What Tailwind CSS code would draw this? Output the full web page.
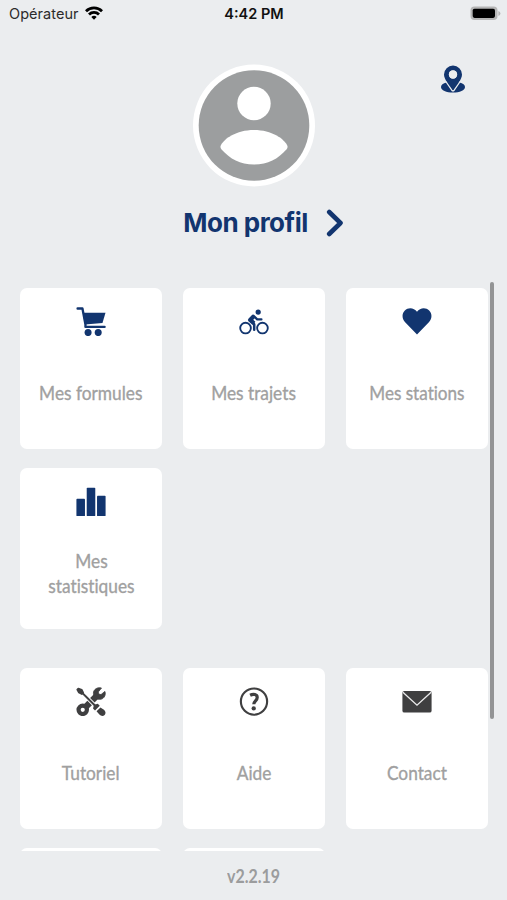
<!DOCTYPE html>
<html lang="fr">
<head>
    <meta charset="UTF-8">
    <meta name="viewport" content="width=device-width, initial-scale=1.0">
    <title>Mon profil</title>
    <script src="https://cdn.jsdelivr.net/npm/@tailwindcss/browser@4"></script>
</head>
<body class="bg-[#ebedef] h-[900px] overflow-hidden flex flex-col font-['Lato',sans-serif]">

    <!-- Status bar -->
    <div class="h-7 shrink-0 grid grid-cols-3 items-center pl-[9px] pr-[6px] font-['Inter',sans-serif] text-[#111]">
        <div class="flex items-center gap-[6px]">
            <span class="text-[14.5px] text-[#2b2b2b] leading-7 tracking-[0.05px]">Opérateur</span>
            <svg class="w-[18px] h-[14px] -mt-[2px]" viewBox="0 0 18 14" fill="none" stroke="#000" stroke-width="2.8">
                <path d="M1 5.2a11.4 11.4 0 0 1 16 0"/>
                <path d="M4 8.500a7.1 7.1 0 0 1 10 0"/>
                <path d="M9 13.7L6.3 11a3.9 3.9 0 0 1 5.4 0z" fill="#000" stroke="none"/>
            </svg>
        </div>
        <span class="text-center text-[14.5px] font-semibold leading-7 -ml-[2px]">4:42 PM</span>
        <svg class="w-[31px] h-[15px] justify-self-end -mt-[2px]" viewBox="0 0 31 15">
            <rect x=".5" y=".5" width="27" height="13.5" rx="4" fill="#b5b5b5"/>
            <rect x="2.7" y="2.7" width="22.3" height="9.2" rx="1.8" fill="#000"/>
            <path d="M28.4 5v5q2-.8 2-2.500t-2-2.500z" fill="#b5b5b5"/>
        </svg>
    </div>

    <!-- Profile -->
    <header class="h-[254px] shrink-0 grid grid-cols-[1fr_auto_1fr] pt-9">
        <div></div>
        <div class="flex flex-col items-center">
            <svg class="w-[124px] h-[124px]" viewBox="0 0 124 124">
                <circle cx="62" cy="61.500" r="61" fill="#fff"/>
                <circle cx="62" cy="61.500" r="55.300" fill="#9c9e9f"/>
                <circle cx="62" cy="39.500" r="16.700" fill="#fff"/>
                <path d="M29 81c3-6 15-15 33-15s30 9 33 15c1 2 .6 3-.6 4.500C86 95 76 100.500 62 100.500S38 95 29.600 85.500C28.400 84 28 83 29 81z" fill="#fff"/>
            </svg>
            <a href="#" class="mt-[18px] ml-[20px] flex items-center gap-[18px] text-[#12356f]">
                <span class="font-['Inter',sans-serif] font-bold text-[26px] leading-[34px] tracking-[-0.5px]">Mon profil</span>
                <svg class="w-[18px] h-7" viewBox="0 0 18 28" fill="none" stroke="currentColor" stroke-width="4.600" stroke-linecap="round" stroke-linejoin="round">
                    <path d="M3.200 3L14.500 14L3.200 25"/>
                </svg>
            </a>
        </div>
        <svg class="w-6 h-7 justify-self-end mr-[42px] mt-px" viewBox="0 0 24 28">
            <path d="M5.500 17.500C2 18.300 0 20 0 22c0 3.300 5.300 5.600 12 5.600S24 25.300 24 22c0-2-2-3.700-5.500-4.500z" fill="#12356f"/>
            <path d="M12 .5a9 9 0 0 0-9 9c0 5.500 6 11 9 15.500 3-4.500 9-10 9-15.500a9 9 0 0 0-9-9zm0 5a4 4 0 1 1 0 8 4 4 0 0 1 0-8z" fill="#12356f" fill-rule="evenodd"/>
            <circle cx="12" cy="9.500" r="4.200" fill="#ebedef"/>
            <path d="M4.800 16.500L10.800 25.200Q12 26.500 13.200 25.200L19.200 16.500" fill="none" stroke="#ebedef" stroke-width="1.300"/>
        </svg>
    </header>

    <!-- Menu -->
    <main class="relative h-[569px] shrink-0 overflow-hidden pt-[6px] pl-5 pr-[19px] text-[19px] leading-[25px] text-[#a0a0a0] text-center [font-variant-ligatures:none] [-webkit-text-stroke:0.35px_#a0a0a0]">
        <div class="grid grid-cols-3 gap-x-[21px] gap-y-[19px] auto-rows-[161px]">
            <a href="#" class="bg-white rounded-[7px] flex flex-col items-center pt-[19px]">
                <svg class="size-[30px]" viewBox="0 0 30 30" fill="#12356f">
                    <path d="M1.200 1.500h5L9.300 18v2.500H29" fill="none" stroke="#12356f" stroke-width="2.400" stroke-linecap="round" stroke-linejoin="round"/>
                    <path d="M6.500 6H29.900L26.800 16.500L8.800 18z"/>
                    <circle cx="12" cy="26.300" r="3.600"/>
                    <circle cx="22.400" cy="26.300" r="3.600"/>
                </svg>
                <span class="h-[116px] flex items-center scale-x-[0.91] whitespace-nowrap">Mes formules</span>
            </a>
            <a href="#" class="bg-white rounded-[7px] flex flex-col items-center pt-[19px]">
                <svg class="size-[30px]" viewBox="0 0 30 30" fill="none" stroke="#12356f">
                    <circle cx="6.300" cy="21.700" r="5.500" stroke-width="1.900"/>
                    <circle cx="23.700" cy="21.700" r="5.500" stroke-width="1.900"/>
                    <circle cx="19.300" cy="5.200" r="2.700" fill="#12356f" stroke="none"/>
                    <path d="M15 9.300l-4 4 4 3.500" stroke-width="4.400" stroke-linejoin="round"/>
                    <path d="M14.500 9l3.800 3.700h4.300" stroke-width="2.400" stroke-linecap="round" stroke-linejoin="round"/>
                    <path d="M13 15l2.200 2.800v5.700" stroke-width="2.600" stroke-linecap="round" stroke-linejoin="round"/>
                </svg>
                <span class="h-[116px] flex items-center scale-x-[0.91] whitespace-nowrap">Mes trajets</span>
            </a>
            <a href="#" class="bg-white rounded-[7px] flex flex-col items-center pt-[19px]">
                <svg class="size-[30px]" viewBox="0 0 30 30" fill="#12356f">
                    <path d="M15 28.300L2.800 15.700C-.8 12-.6 6.500 2.500 3.500 6 .2 12 .6 15 5c3-4.400 9-4.800 12.500-1.500 3.100 3 3.300 8.500-.3 12.200z"/>
                </svg>
                <span class="h-[116px] flex items-center scale-x-[0.9] whitespace-nowrap">Mes stations</span>
            </a>
            <a href="#" class="bg-white rounded-[7px] flex flex-col items-center pt-[19px]">
                <svg class="size-[30px]" viewBox="0 0 30 30" fill="#12356f">
                    <rect x="0" y="12.200" width="8.800" height="17.800" rx=".8"/>
                    <rect x="10.600" y=".7" width="8.800" height="29.300" rx=".8"/>
                    <rect x="21.200" y="9" width="8.800" height="21" rx=".8"/>
                </svg>
                <span class="h-[116px] flex items-center scale-x-[0.91]">Mes<br>statistiques</span>
            </a>
        </div>

        <div class="mt-[39px] grid grid-cols-3 gap-x-[21px] gap-y-[19px] auto-rows-[161px]">
            <a href="#" class="bg-white rounded-[7px] flex flex-col items-center pt-[19px]">
                <svg class="size-[30px]" viewBox="0 0 30 30" fill="#3f3f40">
                    <path d="M9 21L22 8" stroke="#3f3f40" stroke-width="6.500"/>
                    <circle cx="6.500" cy="23.500" r="4.300" fill="#fff" stroke="#3f3f40" stroke-width="4.300"/>
                    <path d="M25.800 1.100l-3.300 4 .5 2.200 2.300.5 4-3.300c1.500 4.500-1.600 8.500-5.700 8.200-2.200-.1-3.300-.9-4.200-2s-1.800-2.300-1.900-4c-.2-4 3.900-7 8.300-5.600z" stroke="#3f3f40" stroke-width=".8"/>
                    <path d="M5 5L26 26" stroke="#fff" stroke-width="4"/>
                    <path d="M5 5L19 19" stroke="#3f3f40" stroke-width="2.100"/>
                    <path d="M1.900 1.500l3.600 1.300 1.500 3-1.500 1.500-3-1.500L.8 2.600z" stroke="#3f3f40" stroke-width="1.600" stroke-linejoin="round"/>
                    <path d="M22 17.200l2 2-4.900 4.900-2-2 1-3.900z"/>
                    <path d="M24.700 21l3.600 2.300c1.800 1.600 2.100 3.900.7 5.400s-3.800 1.300-5.400-.4L20.700 25z"/>
                </svg>
                <span class="h-[116px] flex items-center scale-x-[0.91]">Tutoriel</span>
            </a>
            <a href="#" class="bg-white rounded-[7px] flex flex-col items-center pt-[19px]">
                <svg class="size-[30px]" viewBox="0 0 30 30" fill="none" stroke="#3f3f40">
                    <circle cx="15" cy="15" r="13.500" stroke-width="2.200"/>
                    <path d="M11 8.500c3.500-1.800 7.300-.9 7.300 2.200 0 3.400-3.500 3.600-3.500 7.100" stroke-width="3.300"/>
                    <circle cx="14.700" cy="22" r="2.200" fill="#3f3f40" stroke="none"/>
                </svg>
                <span class="h-[116px] flex items-center scale-x-[0.91]">Aide</span>
            </a>
            <a href="#" class="bg-white rounded-[7px] flex flex-col items-center pt-[19px]">
                <svg class="size-[30px]" viewBox="0 0 30 30">
                    <rect x="0" y="4" width="30" height="22.300" rx="2" fill="#3f3f40"/>
                    <path d="M.5 5.500L15 18.700L29.500 5.500" fill="none" stroke="#ececec" stroke-width="1.400"/>
                </svg>
                <span class="h-[116px] flex items-center scale-x-[0.91]">Contact</span>
            </a>
            <a href="#" class="bg-white rounded-[7px]"></a>
            <a href="#" class="bg-white rounded-[7px]"></a>
        </div>

        <!-- Scroll indicator -->
        <div class="absolute top-0 right-[13px] w-[4px] h-[437px] rounded-full bg-[#939495]"></div>
    </main>

    <footer class="h-[49px] pt-[2px] flex items-center justify-center text-[19px] font-bold text-[#9b9c9d]">
        <span class="scale-x-[0.84]">v2.2.19</span>
    </footer>
</body>
</html>
